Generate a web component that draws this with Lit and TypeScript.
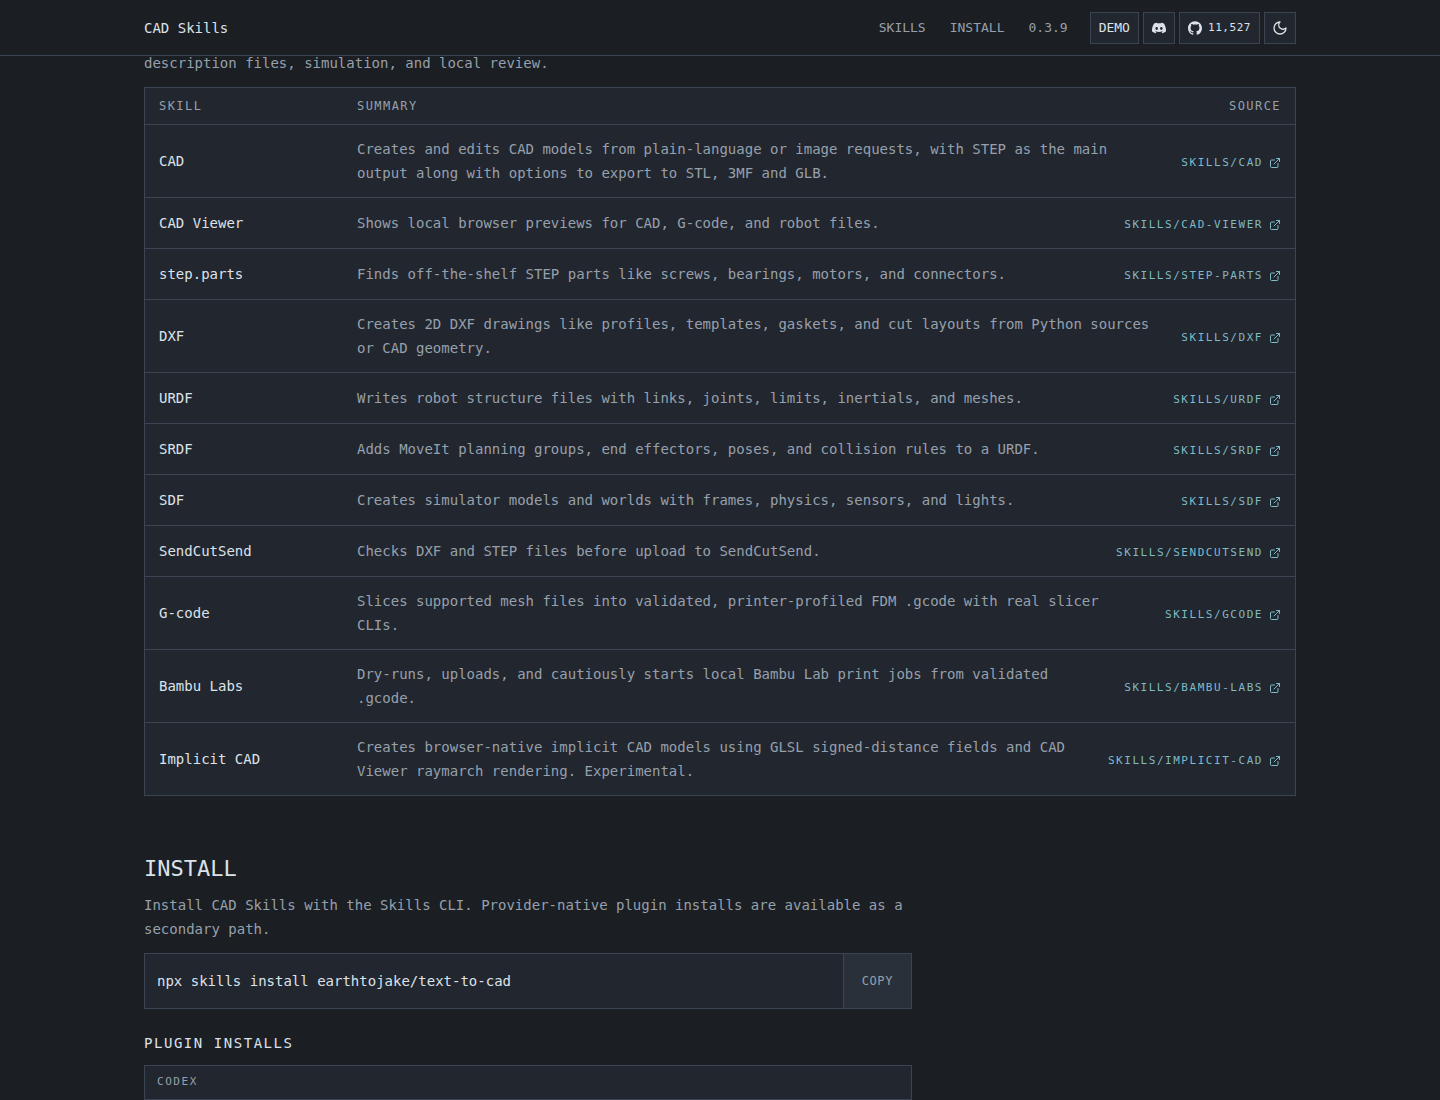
import { LitElement, html, css, svg } from "lit";
import { customElement, state } from "lit/decorators.js";

interface Skill {
  name: string;
  slug: string;
  summary: string;
}

const REPO = "https://github.com/earthtojake/text-to-cad";
const INSTALL_COMMAND = "npx skills install earthtojake/text-to-cad";

const SKILLS: Skill[] = [
  { name: "CAD", slug: "cad", summary: "Creates and edits CAD models from plain-language or image requests, with STEP as the main output along with options to export to STL, 3MF and GLB." },
  { name: "CAD Viewer", slug: "cad-viewer", summary: "Shows local browser previews for CAD, G-code, and robot files." },
  { name: "step.parts", slug: "step-parts", summary: "Finds off-the-shelf STEP parts like screws, bearings, motors, and connectors." },
  { name: "DXF", slug: "dxf", summary: "Creates 2D DXF drawings like profiles, templates, gaskets, and cut layouts from Python sources or CAD geometry." },
  { name: "URDF", slug: "urdf", summary: "Writes robot structure files with links, joints, limits, inertials, and meshes." },
  { name: "SRDF", slug: "srdf", summary: "Adds MoveIt planning groups, end effectors, poses, and collision rules to a URDF." },
  { name: "SDF", slug: "sdf", summary: "Creates simulator models and worlds with frames, physics, sensors, and lights." },
  { name: "SendCutSend", slug: "sendcutsend", summary: "Checks DXF and STEP files before upload to SendCutSend." },
  { name: "G-code", slug: "gcode", summary: "Slices supported mesh files into validated, printer-profiled FDM .gcode with real slicer CLIs." },
  { name: "Bambu Labs", slug: "bambu-labs", summary: "Dry-runs, uploads, and cautiously starts local Bambu Lab print jobs from validated .gcode." },
  { name: "Implicit CAD", slug: "implicit-cad", summary: "Creates browser-native implicit CAD models using GLSL signed-distance fields and CAD Viewer raymarch rendering. Experimental." },
];

const stroked = (size: number, paths: unknown) => html`
  <svg width=${size} height=${size} viewBox="0 0 24 24" fill="none" stroke="currentColor" stroke-width="2"
    stroke-linecap="round" stroke-linejoin="round" aria-hidden="true">${paths}</svg>`;

const filled = (size: number, paths: unknown) => html`
  <svg width=${size} height=${size} viewBox="0 0 24 24" fill="currentColor" aria-hidden="true">${paths}</svg>`;

const externalIcon = stroked(12, svg`
  <path d="M15 3h6v6"/><path d="M10 14 21 3"/>
  <path d="M18 13v6a2 2 0 0 1-2 2H5a2 2 0 0 1-2-2V8a2 2 0 0 1 2-2h6"/>`);

const moonIcon = stroked(16, svg`<path d="M12 3a6 6 0 0 0 9 9 9 9 0 1 1-9-9Z"/>`);

const githubIcon = filled(14, svg`<path d="M12 .297c-6.63 0-12 5.373-12 12 0 5.303 3.438 9.8 8.205 11.385.6.113.82-.258.82-.577 0-.285-.01-1.04-.015-2.04-3.338.724-4.042-1.61-4.042-1.61C4.422 18.07 3.633 17.7 3.633 17.7c-1.087-.744.084-.729.084-.729 1.205.084 1.838 1.236 1.838 1.236 1.07 1.835 2.809 1.305 3.495.998.108-.776.417-1.305.76-1.605-2.665-.3-5.466-1.332-5.466-5.93 0-1.31.465-2.38 1.235-3.22-.135-.303-.54-1.523.105-3.176 0 0 1.005-.322 3.3 1.23.96-.267 1.98-.399 3-.405 1.02.006 2.04.138 3 .405 2.28-1.552 3.285-1.23 3.285-1.23.645 1.653.24 2.873.12 3.176.765.84 1.23 1.91 1.23 3.22 0 4.61-2.805 5.625-5.475 5.92.42.36.81 1.096.81 2.22 0 1.606-.015 2.896-.015 3.286 0 .315.21.69.825.57C20.565 22.092 24 17.592 24 12.297c0-6.627-5.373-12-12-12"/>`);

const discordIcon = filled(14, svg`<path d="M20.317 4.3698a19.7913 19.7913 0 0 0-4.8851-1.5152.0741.0741 0 0 0-.0785.0371c-.211.3753-.4447.8648-.6083 1.2495-1.8447-.2762-3.68-.2762-5.4868 0-.1636-.3933-.4058-.8742-.6177-1.2495a.077.077 0 0 0-.0785-.037 19.7363 19.7363 0 0 0-4.8852 1.515.0699.0699 0 0 0-.0321.0277C.5334 9.0458-.319 13.5799.0992 18.0578a.0824.0824 0 0 0 .0312.0561c2.0528 1.5076 4.0413 2.4228 5.9929 3.0294a.0777.0777 0 0 0 .0842-.0276c.4616-.6304.8731-1.2952 1.226-1.9942a.076.076 0 0 0-.0416-.1057c-.6528-.2476-1.2743-.5495-1.8722-.8923a.077.077 0 0 1-.0076-.1277c.1258-.0943.2517-.1923.3718-.2914a.0743.0743 0 0 1 .0776-.0105c3.9278 1.7933 8.18 1.7933 12.0614 0a.0739.0739 0 0 1 .0785.0095c.1202.099.246.1981.3728.2924a.077.077 0 0 1-.0066.1276 12.2986 12.2986 0 0 1-1.873.8914.0766.0766 0 0 0-.0407.1067c.3604.698.7719 1.3628 1.225 1.9932a.076.076 0 0 0 .0842.0286c1.961-.6067 3.9495-1.5219 6.0023-3.0294a.077.077 0 0 0 .0313-.0552c.5004-5.177-.8382-9.6739-3.5485-13.6604a.061.061 0 0 0-.0312-.0286zM8.02 15.3312c-1.1825 0-2.1569-1.0857-2.1569-2.419 0-1.3332.9555-2.4189 2.157-2.4189 1.2108 0 2.1757 1.0952 2.1568 2.419 0 1.3332-.9555 2.4189-2.1569 2.4189zm7.9748 0c-1.1825 0-2.1569-1.0857-2.1569-2.419 0-1.3332.9554-2.4189 2.1569-2.4189 1.2108 0 2.1757 1.0952 2.1568 2.419 0 1.3332-.946 2.4189-2.1568 2.4189Z"/>`);

@customElement("app-root")
export class AppRoot extends LitElement {
  @state() private copied = false;

  static styles = css`
    :host {
      --page: #1b1e22;
      --panel: #22262e;
      --raised: #29303a;
      --line: #3b4452;
      --text: #dce2ea;
      --muted: #96a0ad;
      --accent: #7fbac6;
      display: block;
      min-height: 100vh;
      background: var(--page);
      color: var(--text);
      font: 14px/24px "DejaVu Sans Mono", monospace;
    }
    *, *::before, *::after { box-sizing: border-box; }
    h2, h3, p { margin: 0; font-weight: 400; }
    a { color: inherit; text-decoration: none; }
    button { font: inherit; color: inherit; margin: 0; border-radius: 0; cursor: pointer; }
    svg { display: block; flex: none; }

    .topbar {
      position: sticky;
      top: 0;
      z-index: 1;
      background: var(--page);
      border-bottom: 1px solid var(--line);
    }
    .wrap { max-width: 1200px; margin: 0 auto; padding: 0 24px; }
    .bar { display: flex; align-items: center; justify-content: space-between; height: 55px; }
    .right { display: flex; align-items: center; gap: 22px; }
    .nav { display: flex; gap: 24px; color: var(--muted); font-size: 13px; }
    .actions { display: flex; gap: 4px; }
    .action {
      display: flex;
      align-items: center;
      justify-content: center;
      gap: 6px;
      height: 32px;
      padding: 0 8px;
      border: 1px solid var(--line);
      background: var(--panel);
      color: var(--text);
      font-size: 13px;
    }
    .square { width: 32px; padding: 0; }
    .count { font-size: 11px; letter-spacing: 0.05em; }

    /* The end of the intro slides under the sticky bar. */
    .content { margin-top: -5px; }
    .prose { max-width: 768px; color: var(--muted); margin-bottom: 12px; }

    .skills { display: block; border: 1px solid var(--line); background: var(--panel); }
    .skills thead, .skills tbody { display: block; }
    .row {
      display: grid;
      grid-template-columns: 198px minmax(0, 1fr) auto;
      align-items: center;
      min-height: 51px;
      padding: 12px 0;
      border-top: 1px solid var(--line);
    }
    .row td, .row th { padding: 0 14px; text-align: left; font-weight: 400; }
    .head {
      min-height: 36px;
      padding: 10px 0;
      border-top: 0;
      color: var(--muted);
      font-size: 12px;
      line-height: 16px;
      letter-spacing: 0.12em;
      text-transform: uppercase;
    }
    .row .end { text-align: right; }
    .summary { color: var(--muted); }
    .row .source { padding-top: 4px; font-size: 11px; line-height: 20px; }
    .link {
      display: inline-flex;
      align-items: center;
      gap: 6px;
      color: var(--accent);
      letter-spacing: 0.14em;
      text-transform: uppercase;
    }

    .install { padding-top: 56px; }
    .title { font-size: 22px; line-height: 33px; margin-bottom: 8px; }
    .command { display: flex; max-width: 768px; min-height: 56px; border: 1px solid var(--line); background: var(--panel); }
    .code { flex: 1; align-self: center; padding: 0 12px; font: inherit; }
    .copy {
      padding: 0 18px;
      border: 0;
      border-left: 1px solid var(--line);
      background: var(--raised);
      color: var(--muted);
      font-size: 12px;
      letter-spacing: 0.05em;
      text-transform: uppercase;
    }
    .subtitle {
      margin: 24px 0 12px;
      font-size: 14px;
      line-height: 20px;
      letter-spacing: 0.11em;
      text-transform: uppercase;
    }
    .provider {
      max-width: 768px;
      padding: 8px 12px 10px;
      border: 1px solid var(--line);
      background: var(--panel);
      color: var(--muted);
      font-size: 11px;
      line-height: 15px;
      letter-spacing: 0.14em;
      text-transform: uppercase;
    }
  `;

  private async copy() {
    await navigator.clipboard?.writeText(INSTALL_COMMAND);
    this.copied = true;
    setTimeout(() => (this.copied = false), 1500);
  }

  private row(skill: Skill) {
    return html`
      <tr class="row">
        <th scope="row">${skill.name}</th>
        <td class="summary">${skill.summary}</td>
        <td class="source end">
          <a class="link" href="${REPO}/tree/main/skills/${skill.slug}">skills/${skill.slug}${externalIcon}</a>
        </td>
      </tr>`;
  }

  render() {
    return html`
      <header class="topbar">
        <div class="wrap bar">
          <a href="/">CAD Skills</a>
          <div class="right">
            <nav class="nav">
              <a href="#skills">SKILLS</a>
              <a href="#install">INSTALL</a>
              <a href="${REPO}/releases">0.3.9</a>
            </nav>
            <div class="actions">
              <a class="action" href="#demo">DEMO</a>
              <a class="action square" href="#discord" aria-label="Discord">${discordIcon}</a>
              <a class="action" href=${REPO}>${githubIcon}<span class="count">11,527</span></a>
              <button class="action square" type="button" aria-label="Toggle theme">${moonIcon}</button>
            </div>
          </div>
        </div>
      </header>
      <main class="wrap content">
        <section id="skills">
          <p class="prose">description files, simulation, and local review.</p>
          <table class="skills">
            <thead>
              <tr class="row head">
                <th scope="col">Skill</th>
                <th scope="col">Summary</th>
                <th scope="col" class="end">Source</th>
              </tr>
            </thead>
            <tbody>${SKILLS.map((s) => this.row(s))}</tbody>
          </table>
        </section>
        <section id="install" class="install">
          <h2 class="title">INSTALL</h2>
          <p class="prose">Install CAD Skills with the Skills CLI. Provider-native plugin installs are available as a secondary path.</p>
          <div class="command">
            <code class="code">${INSTALL_COMMAND}</code>
            <button class="copy" type="button" @click=${this.copy}>${this.copied ? "Copied" : "Copy"}</button>
          </div>
          <h3 class="subtitle">Plugin installs</h3>
          <div class="provider">Codex</div>
        </section>
      </main>
    `;
  }
}
